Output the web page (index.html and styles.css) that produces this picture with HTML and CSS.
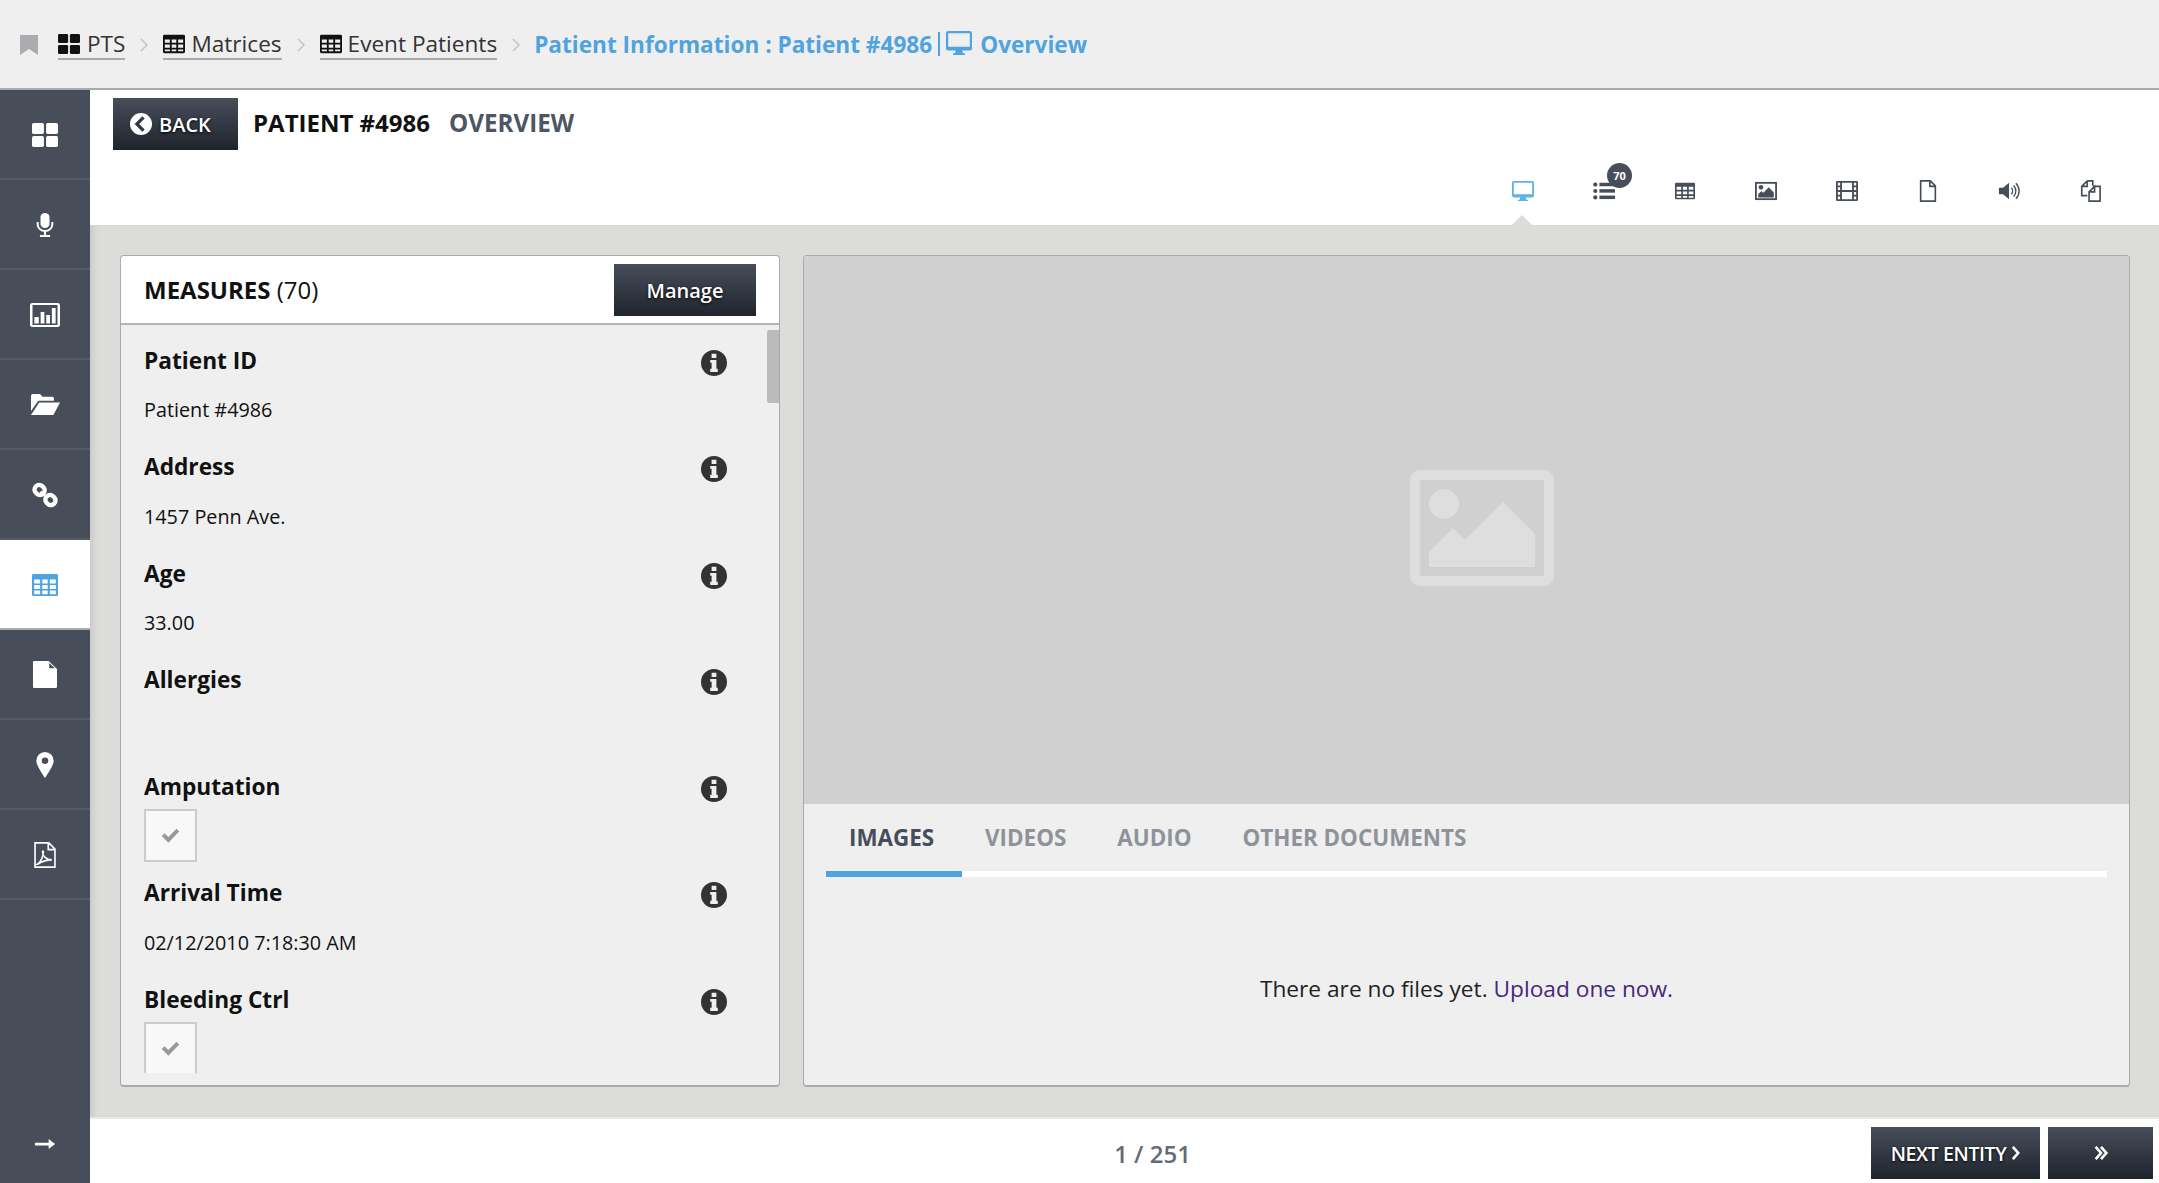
FILE: index.html
```html
<!DOCTYPE html>
<html lang="en">
<head>
  <meta charset="UTF-8" />
  <meta name="viewport" content="width=device-width, initial-scale=1" />
  <title>Patient Information - Overview</title>
  <link rel="stylesheet" href="styles.css">
</head>
<body>
  <svg class="sprites" width="0" height="0">
    <symbol id="i-grid" viewBox="0 0 24 24"><rect x="0" y="1" width="11" height="10" rx="1.5"/><rect x="13" y="1" width="11" height="10" rx="1.5"/><rect x="0" y="13" width="11" height="10" rx="1.5"/><rect x="13" y="13" width="11" height="10" rx="1.5"/></symbol>
    <symbol id="i-table" viewBox="0 0 24 24"><path fill-rule="evenodd" d="M1.500 2h21A1.500 1.500 0 0 1 24 3.500v17a1.500 1.500 0 0 1-1.500 1.500h-21A1.500 1.500 0 0 1 0 20.500v-17A1.500 1.500 0 0 1 1.500 2zM2 7v3.500h5.500V7zm7.500 0v3.500h5V7zm7 0v3.500H22V7zM2 12.500V16h5.500v-3.500zm7.500 0V16h5v-3.500zm7 0V16H22v-3.500zM2 18v2h5.500v-2zm7.500 0v2h5v-2zm7 0v2H22v-2z"/></symbol>
    <symbol id="i-monitor" viewBox="0 0 24 24"><path fill-rule="evenodd" d="M2 1h20a2 2 0 0 1 2 2v14a2 2 0 0 1-2 2h-7l.6 2.500h1.900V23H6.500v-1.500h1.900L9 19H2a2 2 0 0 1-2-2V3a2 2 0 0 1 2-2zm0 2v12.500h20V3z"/></symbol>
    <symbol id="i-picture" viewBox="0 0 24 20"><path fill-rule="evenodd" d="M1 0h22a1 1 0 0 1 1 1v18a1 1 0 0 1-1 1H1a1 1 0 0 1-1-1V1a1 1 0 0 1 1-1zm1 2v16h20V2z"/><circle cx="6.500" cy="6" r="2.500"/><path d="M3.500 17v-3.500L7 10l2 2 6-6 5.500 5.500V17z"/></symbol>
    <symbol id="i-info" viewBox="0 0 24 24"><path fill-rule="evenodd" d="M12 0a12 12 0 1 1 0 24 12 12 0 0 1 0-24zM9.800 3.500v3.800h4.400V3.500zM8.500 9.200v2.600h1.300v5.400H8.500v3h7v-3h-1.300V9.200z"/></symbol>
    <symbol id="i-check" viewBox="0 0 24 24"><path d="M9.300 21 1 12.700l3.500-3.500 4.800 4.800L19.500 3.500 23 7z"/></symbol>
    <symbol id="i-chev" viewBox="0 0 8 14"><path fill="none" stroke="currentColor" stroke-width="1.500" d="M1 1l6 6-6 6"/></symbol>
  </svg>

  <header class="topbar">
    <svg class="bookmark" viewBox="0 0 18 20"><path d="M0 0h18v20l-9-6-9 6z"/></svg>
    <nav class="crumbs">
      <a class="crumb crumb-first"><svg class="crumb-icon"><use href="#i-grid"/></svg>PTS</a>
      <svg class="chev"><use href="#i-chev"/></svg>
      <a class="crumb"><svg class="crumb-icon"><use href="#i-table"/></svg>Matrices</a>
      <svg class="chev"><use href="#i-chev"/></svg>
      <a class="crumb"><svg class="crumb-icon"><use href="#i-table"/></svg>Event Patients</a>
      <svg class="chev"><use href="#i-chev"/></svg>
      <span class="crumb-current">Patient Information : Patient #4986<span class="crumb-bar"></span><svg class="crumb-monitor"><use href="#i-monitor"/></svg>Overview</span>
    </nav>
  </header>

  <div class="main">
    <aside class="sidebar">
      <a class="side-item"><svg class="side-icon"><use href="#i-grid"/></svg></a>
      <a class="side-item"><svg class="side-icon side-mic" viewBox="4 0 16 24" preserveAspectRatio="none"><rect x="8" y="0" width="8" height="15" rx="4"/><path fill="none" stroke="currentColor" stroke-width="1.800" d="M5.500 9v2.500a6.500 6.500 0 0 0 13 0V9M12 18v4M7.500 23h9"/></svg></a>
      <a class="side-item"><svg class="side-icon side-chart" viewBox="0 0 24 24" preserveAspectRatio="none"><path fill-rule="evenodd" d="M2 0h20a2 2 0 0 1 2 2v20a2 2 0 0 1-2 2H2a2 2 0 0 1-2-2V2a2 2 0 0 1 2-2zm0 2v20h20V2z"/><rect x="3.500" y="14" width="3.500" height="6.500"/><rect x="8.500" y="9" width="3" height="11.500"/><rect x="13" y="12" width="3" height="8.500"/><rect x="17.500" y="5" width="3" height="15.500"/></svg></a>
      <a class="side-item"><svg class="side-icon side-folder" viewBox="0 3 24 18.500" preserveAspectRatio="none"><path d="M0 4.500a1.500 1.500 0 0 1 1.500-1.500h6l2 2.500h8a1.500 1.500 0 0 1 1.500 1.500v2H6L0 18z"/><path d="M6.800 10.500H24L18.500 21.500H0z"/></svg></a>
      <a class="side-item"><svg class="side-icon" viewBox="0 0 24 24"><g fill="none" stroke="currentColor" stroke-width="4"><rect x="2.500" y="3" width="9.500" height="8.500" rx="4" transform="rotate(45 7 7)"/><rect x="12" y="12.500" width="9.500" height="8.500" rx="4" transform="rotate(45 17 17)"/></g><path d="M7 9.500l6 6 2.500-1-6.500-6.500z"/></svg></a>
      <a class="side-item side-active"><svg class="side-icon side-grid" viewBox="0 0 24 24" preserveAspectRatio="none"><path fill-rule="evenodd" d="M1.500 0h21A1.500 1.500 0 0 1 24 1.500v21a1.500 1.500 0 0 1-1.500 1.500h-21A1.500 1.500 0 0 1 0 22.500v-21A1.500 1.500 0 0 1 1.500 0zM2 6v4.300h5.500V6zm7.500 0v4.300h5V6zm7 0v4.300H22V6zM2 12v4.300h5.500V12zm7.500 0v4.300h5V12zm7 0v4.300H22V12zM2 18v4h5.500v-4zm7.500 0v4h5v-4zm7 0v4H22v-4z"/></svg></a>
      <a class="side-item"><svg class="side-icon side-file" viewBox="2 0 20 24" preserveAspectRatio="none"><path fill-rule="evenodd" d="M2 0h13l7 7v16a1 1 0 0 1-1 1H3a1 1 0 0 1-1-1V1a1 1 0 0 1 1-1zM15.500 1.800V6.500h4.700z"/></svg></a>
      <a class="side-item"><svg class="side-icon" viewBox="0 0 24 24"><path fill-rule="evenodd" d="M12 0a8 8 0 0 1 8 8c0 4.500-5.500 12-8 16-2.500-4-8-11.500-8-16a8 8 0 0 1 8-8zm0 5a3 3 0 1 0 0 6 3 3 0 0 0 0-6z"/></svg></a>
      <a class="side-item"><svg class="side-icon" viewBox="0 0 24 24"><path fill="none" stroke="currentColor" stroke-width="1.500" d="M2.800.8h12.700l5.700 5.700v16.700H2.800zM15 1v6h6M5 20.500c3-2 5.500-7 5.500-11.500 0-1-.8-1-.8 0 0 4 3.500 7.500 8.500 7.500-5 0-9 1.500-13 4z"/></svg></a>
      <a class="side-item side-bottom"><svg class="side-icon" viewBox="0 0 24 24"><path d="M1 10.500h15V6.500l7 5.500-7 5.500v-4H1z"/></svg></a>
    </aside>

    <div class="content">
      <div class="page-head">
        <div class="title-row">
          <a class="btn btn-back"><svg class="back-icon" viewBox="0 0 24 24"><path fill-rule="evenodd" d="M12 0a12 12 0 1 1 0 24 12 12 0 0 1 0-24zm4 6-2.500-2.500L5 12l8.500 8.500L16 18l-6-6z"/></svg>BACK</a>
          <h1 class="title">PATIENT #4986</h1>
          <h2 class="subtitle">OVERVIEW</h2>
        </div>
        <div class="view-tabs">
          <a class="view-tab view-active"><svg><use href="#i-monitor"/></svg></a>
          <a class="view-tab"><svg viewBox="0 0 24 24"><circle cx="2.500" cy="5" r="2.300"/><circle cx="2.500" cy="12" r="2.300"/><circle cx="2.500" cy="19" r="2.300"/><rect x="7" y="3" width="17" height="3.800"/><rect x="7" y="10" width="17" height="3.800"/><rect x="7" y="17" width="17" height="3.800"/></svg><span class="badge">70</span></a>
          <a class="view-tab"><svg class="tab-small"><use href="#i-table"/></svg></a>
          <a class="view-tab"><svg viewBox="0 -2 24 24"><use href="#i-picture" width="24" height="20"/></svg></a>
          <a class="view-tab"><svg viewBox="0 0 24 24"><path fill-rule="evenodd" d="M1.500 1h21A1.500 1.500 0 0 1 24 2.500v19a1.500 1.500 0 0 1-1.500 1.500h-21A1.500 1.500 0 0 1 0 21.500v-19A1.500 1.500 0 0 1 1.500 1zM2 3v3h2.500V3zm0 5v3h2.500V8zm0 5v3h2.500v-3zm0 5v3h2.500v-3zM19.500 3v3H22V3zm0 5v3H22V8zm0 5v3H22v-3zm0 5v3H22v-3zM6.500 3v8h11V3zm0 10v8h11v-8z"/></svg></a>
          <a class="view-tab"><svg viewBox="0 0 24 24"><path fill="none" stroke="currentColor" stroke-width="1.800" d="M4 1h10.500L20 6.500V23H4zM14 1v6h6"/></svg></a>
          <a class="view-tab"><svg viewBox="0 0 24 24"><path d="M1 8.500h4.500L12 3v18l-6.500-5.500H1z"/><path fill="none" stroke="currentColor" stroke-width="1.500" d="M14.500 8.500a5 5 0 0 1 0 7M17 6a8.500 8.500 0 0 1 0 12M19.500 3.500a12 12 0 0 1 0 17"/></svg></a>
          <a class="view-tab"><svg viewBox="0 0 24 24"><path fill="none" stroke="currentColor" stroke-width="1.800" d="M9 1h6v5M9 1 3 7v10h6M9 1v6H3M15 7h8v16H11V13l6-6v6h-6"/></svg></a>
        </div>
      </div>

      <div class="workspace">
        <section class="panel measures">
          <div class="measures-head">
            <h3 class="measures-title"><b>MEASURES</b> (70)</h3>
            <a class="btn btn-manage">Manage</a>
          </div>
          <div class="measures-list">
            <div class="field"><div class="field-label">Patient ID<svg class="info"><use href="#i-info"/></svg></div><div class="field-value">Patient #4986</div></div>
            <div class="field"><div class="field-label">Address<svg class="info"><use href="#i-info"/></svg></div><div class="field-value">1457 Penn Ave.</div></div>
            <div class="field"><div class="field-label">Age<svg class="info"><use href="#i-info"/></svg></div><div class="field-value">33.00</div></div>
            <div class="field"><div class="field-label">Allergies<svg class="info"><use href="#i-info"/></svg></div><div class="field-value"></div></div>
            <div class="field"><div class="field-label">Amputation<svg class="info"><use href="#i-info"/></svg></div><div class="field-value"><span class="checkbox"><svg><use href="#i-check"/></svg></span></div></div>
            <div class="field"><div class="field-label">Arrival Time<svg class="info"><use href="#i-info"/></svg></div><div class="field-value">02/12/2010 7:18:30 AM</div></div>
            <div class="field"><div class="field-label">Bleeding Ctrl<svg class="info"><use href="#i-info"/></svg></div><div class="field-value"><span class="checkbox"><svg><use href="#i-check"/></svg></span></div></div>
          </div>
          <div class="scrollbar"></div>
        </section>

        <section class="panel viewer">
          <div class="preview"><svg class="preview-icon" viewBox="0 0 144 116"><path fill-rule="evenodd" d="M10 0h124a10 10 0 0 1 10 10v96a10 10 0 0 1-10 10H10a10 10 0 0 1-10-10V10A10 10 0 0 1 10 0zm2 10a2 2 0 0 0-2 2v92a2 2 0 0 0 2 2h120a2 2 0 0 0 2-2V12a2 2 0 0 0-2-2z"/><circle cx="34" cy="34" r="15"/><path d="M19 97V82l24-24 12 12 38-38 32 32v33z"/></svg></div>
          <div class="tabs">
            <a class="tab tab-active">IMAGES</a>
            <a class="tab">VIDEOS</a>
            <a class="tab">AUDIO</a>
            <a class="tab">OTHER DOCUMENTS</a>
          </div>
          <p class="empty">There are no files yet. <a class="empty-link">Upload one now.</a></p>
        </section>
      </div>

      <footer class="footer">
        <div class="pager">1 / 251</div>
        <a class="btn btn-next">NEXT ENTITY<svg class="next-chev" viewBox="0 0 10 18"><path fill="none" stroke="currentColor" stroke-width="3" d="M2 2l6 7-6 7"/></svg></a>
        <a class="btn btn-last"><svg class="last-chev" viewBox="0 0 16 18"><path fill="none" stroke="currentColor" stroke-width="3" d="M2 2l6 7-6 7M8 2l6 7-6 7"/></svg></a>
      </footer>
    </div>
  </div>
</body>
</html>
```

FILE: styles.css
```css
* {
  box-sizing: border-box;
}
html, body {
  height: 100%;
}
body {
  margin: 0;
  display: flex;
  flex-direction: column;
  height: 1183px;
  overflow: hidden;
  font-family: 'Open Sans', 'Noto Sans', sans-serif;
  color: #111;
  background: #fff;
}
svg {
  fill: currentColor;
}
.sprites {
  position: absolute;
}

/* top breadcrumb bar */
.topbar {
  height: 90px;
  flex: none;
  display: flex;
  align-items: center;
  padding-left: 20px;
  background: #efefef;
  border-bottom: 2px solid #aaa;
}
.bookmark {
  width: 18px;
  height: 20px;
  margin-top: 1px;
  color: #aaacb0;
}
.crumbs {
  display: flex;
  align-items: center;
  margin-left: 20px;
  font-size: 22.6px;
}
.crumb {
  display: flex;
  align-items: center;
  height: 30px;
  margin-top: 1px;
  color: #333;
  border-bottom: 2px solid #aaa;
}
.crumb-icon {
  width: 22px;
  height: 22px;
  margin-right: 6px;
  color: #111;
}
.crumb-first .crumb-icon {
  margin-right: 7px;
}
.chev {
  width: 8px;
  height: 14px;
  margin: 1px 15px 0 15px;
  color: #c4c4c4;
}
.crumb-current {
  display: flex;
  align-items: center;
  font-weight: 700;
  color: #4fa3e0;
  margin-left: -1px;
}
.crumb-bar {
  width: 2px;
  height: 24px;
  margin: 0 6px 0 6px;
  background: #4fa3e0;
}
.crumb-monitor {
  width: 26px;
  height: 26px;
  margin: -3px 8px 0 0;
}

/* sidebar */
.main {
  flex: 1;
  display: flex;
  min-height: 0;
}
.sidebar {
  width: 90px;
  flex: none;
  display: flex;
  flex-direction: column;
  background: #474e5a;
}
.side-item {
  height: 90px;
  flex: none;
  display: flex;
  align-items: center;
  justify-content: center;
  color: #fff;
  border-bottom: 2px solid #555c67;
}
.side-icon {
  width: 26px;
  height: 26px;
  margin-top: 1px;
}
.side-mic {
  width: 18px;
  height: 24px;
}
.side-chart {
  width: 30px;
  height: 24px;
}
.side-folder {
  width: 29px;
  height: 21px;
}
.side-grid {
  width: 26px;
  height: 22px;
}
.side-file {
  width: 24px;
  height: 27px;
}
.side-active {
  background: #fff;
  color: #4fa3e0;
  border-bottom-color: #aaa;
}
.side-bottom {
  margin-top: auto;
  height: 80px;
  border-bottom: 0;
}
.side-bottom .side-icon {
  width: 22px;
  height: 22px;
}

/* page heading */
.content {
  flex: 1;
  display: flex;
  flex-direction: column;
  min-width: 0;
}
.page-head {
  height: 135px;
  flex: none;
  display: flex;
  flex-direction: column;
  justify-content: space-between;
  padding: 8px 0 0 23px;
}
.title-row {
  display: flex;
  align-items: center;
}
.btn {
  display: flex;
  align-items: center;
  justify-content: center;
  color: #fff;
  background: linear-gradient(#474e5a, #1f242d);
  text-shadow: 0 1px 3px #000;
}
.btn-back {
  width: 125px;
  height: 52px;
  justify-content: flex-start;
  padding-left: 17px;
  font-size: 20px;
  font-weight: 600;
}
.back-icon {
  width: 22px;
  height: 22px;
  margin-right: 7px;
}
.title {
  margin: 0 0 3px 15px;
  font-size: 24px;
  font-weight: 700;
  color: #111;
}
.subtitle {
  margin: 0 0 3px 19px;
  font-size: 24.2px;
  font-weight: 700;
  color: #4d5663;
}
.view-tabs {
  display: flex;
  justify-content: flex-end;
  padding-right: 29px;
}
.view-tab {
  position: relative;
  width: 81px;
  height: 60px;
  display: flex;
  justify-content: center;
  color: #474e5a;
}
.view-tab svg {
  width: 22px;
  height: 22px;
  margin-top: 15px;
}
.view-tab .tab-small {
  width: 20px;
  height: 20px;
  margin-top: 16px;
}
.view-active {
  color: #5cb3ec;
}
.view-active::after {
  content: "";
  position: absolute;
  left: 30px;
  bottom: 0;
  border: 10px solid transparent;
  border-top: 0;
  border-bottom-color: #dcdcda;
}
.badge {
  position: absolute;
  left: 44px;
  top: -2px;
  width: 25px;
  height: 25px;
  border-radius: 50%;
  background: #474e5a;
  color: #fff;
  font-size: 11px;
  font-weight: 700;
  line-height: 25px;
  text-align: center;
}

/* panels */
.workspace {
  height: 894px;
  flex: none;
  display: flex;
  gap: 23px;
  padding: 30px 29px 30px 30px;
  background: #dcdcda;
  border-bottom: 2px solid #e8e8e8;
  box-shadow: inset 7px 0 6px -4px #c8c8c8;
}
.panel {
  position: relative;
  background: #efefef;
  border: 1px solid #aaa;
  border-bottom-width: 2px;
  border-radius: 4px;
}
.measures {
  width: 660px;
  flex: none;
  display: flex;
  flex-direction: column;
  padding-bottom: 12px;
}
.measures-head {
  height: 69px;
  flex: none;
  display: flex;
  align-items: center;
  justify-content: space-between;
  padding: 0 23px;
  background: #fff;
  border-bottom: 2px solid #b5b5b5;
  border-radius: 4px 4px 0 0;
}
.measures-title {
  margin: 0;
  font-size: 24px;
  font-weight: 400;
}
.measures-title b {
  font-weight: 700;
}
.btn-manage {
  width: 142px;
  height: 52px;
  margin-top: 1px;
  font-size: 20px;
  font-weight: 600;
}
.measures-list {
  flex: 1;
  padding: 12px 52px 0 23px;
  overflow: hidden;
}
.field {
  margin-bottom: 7.5px;
}
.field-label {
  height: 46px;
  display: flex;
  align-items: center;
  justify-content: space-between;
  font-size: 22.7px;
  font-weight: 700;
}
.info {
  width: 26px;
  height: 26px;
  margin-top: 5px;
  color: #333;
}
.field-value {
  height: 53px;
  display: flex;
  align-items: center;
  font-size: 19.8px;
}
.checkbox {
  width: 53px;
  height: 53px;
  display: flex;
  align-items: center;
  justify-content: center;
  background: #f8f8f8;
  border: 2px solid #ccc;
  color: #999;
}
.checkbox svg {
  width: 19px;
  height: 19px;
}
.scrollbar {
  position: absolute;
  right: 0;
  top: 74px;
  width: 12px;
  height: 73px;
  background: #bbb;
  border-radius: 3px 0 0 3px;
}

/* right viewer */
.viewer {
  flex: 1;
  min-width: 0;
}
.preview {
  height: 548px;
  display: flex;
  align-items: center;
  justify-content: center;
  background: #d0d0d0;
  border-radius: 4px 4px 0 0;
}
.preview-icon {
  width: 144px;
  height: 116px;
  color: #dedede;
  margin: -4px 0 0 30px;
}
.tabs {
  height: 73px;
  margin: 0 22px;
  display: flex;
  align-items: center;
  border-bottom: 6px solid #fff;
  font-size: 22.4px;
  font-weight: 700;
  color: #8e939b;
}
.tab {
  height: 67px;
  display: flex;
  align-items: center;
  padding: 0 28px 1px 23px;
}
.tab-active {
  color: #474e5a;
  box-shadow: 0 6px 0 #4fa3e0;
}
.empty {
  margin: 96px 0 0;
  text-align: center;
  font-size: 22.7px;
  line-height: 32px;
  color: #222;
}
.empty-link {
  color: #45277a;
}

/* footer */
.footer {
  height: 64px;
  flex: none;
  display: flex;
  align-items: center;
  padding: 4px 6px 0 0;
  gap: 8px;
}
.pager {
  flex: 1;
  padding-left: 352px;
  text-align: center;
  font-size: 24px;
  font-weight: 600;
  color: #636b77;
}
.btn-next {
  width: 169px;
  height: 52px;
  font-size: 19.5px;
  font-weight: 600;
  letter-spacing: -0.4px;
}
.next-chev {
  width: 9px;
  height: 16px;
  margin-left: 5px;
}
.btn-last {
  width: 105px;
  height: 52px;
}
.last-chev {
  width: 16px;
  height: 16px;
}
```
